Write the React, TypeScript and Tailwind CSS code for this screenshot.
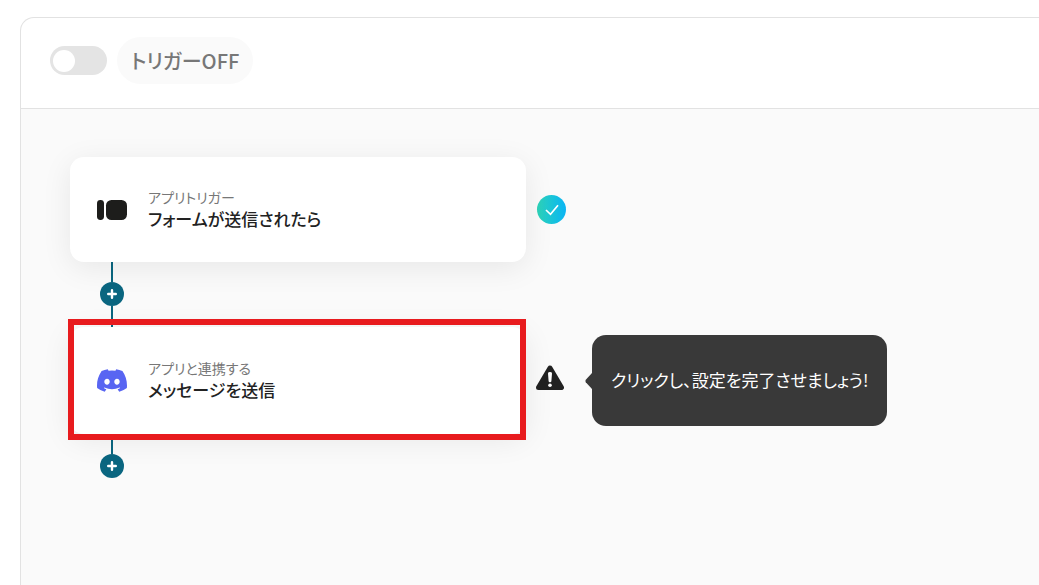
import { useState } from 'react'
import type { ReactNode } from 'react'

type StepCardProps = {
  icon: ReactNode
  caption: string
  title: string
  selected?: boolean
}

const FormIcon = () => (
  <svg viewBox="0 0 30 20" className="h-5 w-[30px]" fill="#1d1d1b" aria-hidden="true">
    <rect x="0" y="0" width="7" height="20" rx="3.4" />
    <rect x="9" y="0" width="21" height="20" rx="5.5" />
  </svg>
)

const DiscordIcon = () => (
  <svg viewBox="0 0 127.14 96.36" className="h-[23px] w-[30px]" fill="#5865f2" aria-hidden="true">
    <path d="M107.7,8.07A105.15,105.15,0,0,0,81.47,0a72.06,72.06,0,0,0-3.36,6.83A97.68,97.68,0,0,0,49,6.83,72.37,72.37,0,0,0,45.64,0,105.89,105.89,0,0,0,19.39,8.09C2.79,32.65-1.71,56.6.54,80.21h0A105.73,105.73,0,0,0,32.71,96.36,77.7,77.7,0,0,0,39.6,85.25a68.42,68.42,0,0,1-10.85-5.18c.91-.66,1.8-1.34,2.66-2a75.57,75.57,0,0,0,64.32,0c.87.71,1.76,1.39,2.66,2a68.68,68.68,0,0,1-10.87,5.19,77,77,0,0,0,6.89,11.1A105.25,105.25,0,0,0,126.6,80.22h0C129.24,52.84,122.09,29.11,107.7,8.07ZM42.45,65.69C36.18,65.69,31,60,31,53s5-12.74,11.43-12.74S54,46,53.89,53,48.84,65.69,42.45,65.69Zm42.24,0C78.41,65.69,73.25,60,73.25,53s5-12.74,11.44-12.74S96.23,46,96.12,53,91.08,65.69,84.69,65.69Z" />
  </svg>
)

const WarningIcon = () => (
  <svg viewBox="0 0 28 26" className="h-[26px] w-7" role="img" aria-label="未設定">
    <path
      d="M14 3 L25.5 22.5 H2.5 Z"
      fill="#222"
      stroke="#222"
      strokeWidth="5"
      strokeLinejoin="round"
    />
    <path d="M12 8.4 a2 1.4 0 0 1 4 0 l-.6 7.6 a1.4 1.3 0 0 1-2.8 0 Z" fill="#fff" />
    <circle cx="14" cy="20.3" r="1.8" fill="#fff" />
  </svg>
)

const DoneBadge = () => (
  <span className="flex size-[29px] items-center justify-center rounded-full bg-linear-to-r from-[#2ed3b7] to-[#0cb4f4]">
    <svg viewBox="0 0 14 12" className="h-3 w-3.5" fill="none" role="img" aria-label="設定済み">
      <path d="M1 6 L5.5 10.3 L13 1.3" stroke="#fff" strokeWidth="1.7" />
    </svg>
  </span>
)

const StepCard = ({ icon, caption, title, selected }: StepCardProps) => (
  <button
    type="button"
    className={`relative flex w-[456px] shrink-0 items-center gap-[21px] rounded-[14px] bg-white px-[27px] text-left shadow-[0_6px_30px_rgba(0,0,0,0.08)] ${
      selected ? 'py-[31px]' : 'py-[30px]'
    }`}
  >
    {icon}
    <span className="flex flex-col pb-0.5">
      <span className="text-[14px] leading-5 text-[#777]">{caption}</span>
      <span className="text-[17px] leading-[23px] font-medium text-[#222]">{title}</span>
    </span>
    {selected && (
      <span className="absolute -top-2 right-0 -bottom-1.5 -left-0.5 border-6 border-[#e81b1e]" />
    )}
  </button>
)

const AddStep = ({ last }: { last?: boolean }) => (
  <div className="ml-[30px] flex w-6 flex-col items-center">
    <span className="h-5 w-0.5 bg-[#0a6680]" />
    <button
      type="button"
      aria-label="ステップを追加"
      className="flex size-6 items-center justify-center rounded-full bg-[#0a6680]"
    >
      <svg viewBox="0 0 10 10" className="size-2.5" aria-hidden="true">
        <path d="M5 1.2 V8.8 M1.2 5 H8.8" stroke="#fff" strokeWidth="2.4" strokeLinecap="round" />
      </svg>
    </button>
    {!last && <span className="h-[21px] w-0.5 bg-[#0a6680]" />}
  </div>
)

const App = () => {
  const [enabled, setEnabled] = useState(false)

  return (
    <div className="flex min-h-screen flex-col overflow-hidden bg-white pt-[17px] pl-5 font-['Noto_Sans_CJK_JP',sans-serif] [font-feature-settings:'palt']">
      <main className="flex grow flex-col overflow-hidden rounded-tl-[14px] border-t border-l border-[#e2e2e2]">
        <header className="flex items-center gap-2.5 border-b border-[#e2e2e2] pt-[19px] pb-6 pl-[29px]">
          <input
            id="trigger"
            type="checkbox"
            role="switch"
            checked={enabled}
            onChange={(event) => setEnabled(event.target.checked)}
            className="flex h-[29px] w-[57px] appearance-none items-center rounded-full bg-[#e4e4e4] px-[3px] before:size-[22px] before:rounded-full before:bg-white before:content-[''] checked:justify-end checked:bg-[#0a6680]"
          />
          <label
            htmlFor="trigger"
            className="rounded-full bg-[#fafafa] px-3.5 py-2.5 text-[20px] leading-[27px] font-medium text-[#777]"
          >
            {enabled ? 'トリガーON' : 'トリガーOFF'}
          </label>
        </header>

        <section className="grow bg-[#fafafa] pt-12 pb-12 pl-[49px]">
          <div className="flex items-center gap-[11px]">
            <StepCard icon={<FormIcon />} caption="アプリトリガー" title="フォームが送信されたら" />
            <DoneBadge />
          </div>
          <AddStep />
          <div className="flex items-center">
            <StepCard
              icon={<DiscordIcon />}
              caption="アプリと連携する"
              title="メッセージを送信"
              selected
            />
            <div className="ml-2.5 pb-1.5">
              <WarningIcon />
            </div>
            <div className="ml-[21px] flex items-center">
              <svg viewBox="0 0 7 16" className="h-4 w-[7px]" fill="#393939" aria-hidden="true">
                <path d="M7 0 V16 L.8 9.3 Q0 8 .8 6.7 Z" />
              </svg>
              <p className="rounded-[14px] bg-[#393939] px-[19px] pt-8 pb-[34px] text-[17px] leading-[25px] whitespace-nowrap text-white">
                クリックし、設定を完了させましょう!
              </p>
            </div>
          </div>
          <AddStep last />
        </section>
      </main>
    </div>
  )
}

export default App
